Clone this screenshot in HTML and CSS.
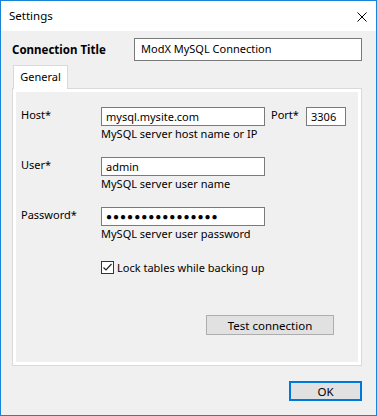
FILE: index.html
```html
<!DOCTYPE html>
<html lang="en">
<head>
    <meta charset="UTF-8">
    <meta name="viewport" content="width=device-width, initial-scale=1.0">
    <title>Settings</title>
    <link rel="stylesheet" href="styles.css">
</head>
<body>
    <div class="window">
        <div class="titlebar">
            <span class="title">Settings</span>
            <svg class="close" width="10" height="10" viewBox="0 0 10 10">
                <path d="M0.5 0.5 L9.5 9.5 M9.5 0.5 L0.5 9.5" stroke="#000" stroke-width="1" fill="none"/>
            </svg>
        </div>

        <div class="content">
            <div class="conn-row">
                <span class="conn-label">Connection Title</span>
                <div class="textbox conn-input">ModX MySQL Connection</div>
            </div>

            <div class="tabs">
                <div class="tab active">General</div>
            </div>

            <div class="panel">
                <div class="panel-inner">
                    <div class="field-row">
                        <span class="label">Host*</span>
                        <div class="field">
                            <div class="textbox wide">mysql.mysite.com</div>
                            <div class="hint">MySQL server host name or IP</div>
                        </div>
                        <span class="label port-label">Port*</span>
                        <div class="textbox port">3306</div>
                    </div>

                    <div class="field-row">
                        <span class="label">User*</span>
                        <div class="field">
                            <div class="textbox wide">admin</div>
                            <div class="hint">MySQL server user name</div>
                        </div>
                    </div>

                    <div class="field-row">
                        <span class="label">Password*</span>
                        <div class="field">
                            <div class="textbox wide password">&#9679;&#9679;&#9679;&#9679;&#9679;&#9679;&#9679;&#9679;&#9679;&#9679;&#9679;&#9679;&#9679;&#9679;&#9679;&#9679;</div>
                            <div class="hint">MySQL server user password</div>
                        </div>
                    </div>

                    <label class="check-row">
                        <span class="checkbox">
                            <svg width="11" height="11" viewBox="0 0 11 11">
                                <path d="M1.5 5.5 L4 8 L9.5 2" stroke="#222" stroke-width="1.2" fill="none"/>
                            </svg>
                        </span>
                        <span>Lock tables while backing up</span>
                    </label>

                    <div class="test-row">
                        <button class="btn test-btn">Test connection</button>
                    </div>
                </div>
            </div>

            <div class="footer">
                <button class="btn btn-default">OK</button>
            </div>
        </div>
    </div>
</body>
</html>
```

FILE: styles.css
```css
body {
    margin: 0;
    padding: 0;
    font-family: "Noto Sans", "Liberation Sans", sans-serif;
    font-size: 11px;
    color: #000;
    background-color: #ffffff;
}

.window {
    box-sizing: border-box;
    width: 377px;
    height: 416px;
    border: 1px solid #1883d7;
    background-color: #f0f0f0;
    display: flex;
    flex-direction: column;
}

.titlebar {
    height: 30px;
    background-color: #ffffff;
    display: flex;
    align-items: center;
    justify-content: space-between;
    padding: 0 9px 0 8px;
    flex-shrink: 0;
}

.title {
    font-size: 11.5px;
    margin-top: -1px;
}

.close {
    display: block;
    margin-top: 1px;
}

.content {
    padding: 7px 14px 0 11px;
    display: flex;
    flex-direction: column;
}

.conn-row {
    display: flex;
    align-items: center;
    height: 23px;
}

.conn-label {
    width: 122px;
    font-weight: bold;
    font-size: 11.5px;
}

.textbox {
    box-sizing: border-box;
    background-color: #ffffff;
    border: 1px solid #7a7a7a;
    height: 19px;
    line-height: 17px;
    padding: 0 4px;
    white-space: nowrap;
    overflow: hidden;
}

.conn-input {
    flex: 1;
    height: 23px;
    line-height: 20px;
    padding: 0 6px;
    font-size: 11px;
}

.tabs {
    display: flex;
    margin-top: 4px;
    padding-left: 1px;
    position: relative;
    z-index: 1;
    margin-bottom: -1px;
}

.tab {
    box-sizing: border-box;
    height: 24px;
    width: 55px;
    border: 1px solid #d9d9d9;
    border-bottom: none;
    background-color: #ffffff;
    text-align: center;
    line-height: 22px;
}

.panel {
    box-sizing: border-box;
    width: 350px;
    height: 278px;
    border: 1px solid #d9d9d9;
    background-color: #ffffff;
    padding: 3px;
    display: flex;
}

.panel-inner {
    flex: 1;
    background-color: #f0f0f0;
    padding: 15px 0 0 5px;
    display: flex;
    flex-direction: column;
}

.field-row {
    display: flex;
    align-items: flex-start;
    margin-bottom: 16px;
}

.label {
    width: 80px;
    line-height: 15px;
}

.field {
    display: flex;
    flex-direction: column;
}

.wide {
    width: 164px;
}

.password {
    font-size: 10px;
    letter-spacing: 1px;
}

.hint {
    line-height: 15px;
}

.port-label {
    width: 35px;
    margin-left: 6px;
}

.port {
    width: 40px;
}

.check-row {
    display: flex;
    align-items: center;
    gap: 3px;
    margin: 4px 0 0 80px;
    height: 13px;
}

.checkbox {
    box-sizing: border-box;
    width: 13px;
    height: 13px;
    border: 1px solid #333333;
    background-color: #ffffff;
    display: flex;
    align-items: center;
    justify-content: center;
}

.checkbox svg {
    display: block;
}

.test-row {
    display: flex;
    justify-content: flex-end;
    padding-right: 24px;
    margin-top: 41px;
}

.btn {
    box-sizing: border-box;
    font-family: inherit;
    font-size: 11.5px;
    color: #000;
    background-color: #e1e1e1;
    border: 1px solid #adadad;
    height: 20px;
    padding: 0;
    cursor: pointer;
}

.test-btn {
    width: 128px;
}

.footer {
    display: flex;
    justify-content: flex-end;
    margin-top: 15px;
}

.btn-default {
    width: 73px;
    border: 2px solid #0078d7;
}
```
